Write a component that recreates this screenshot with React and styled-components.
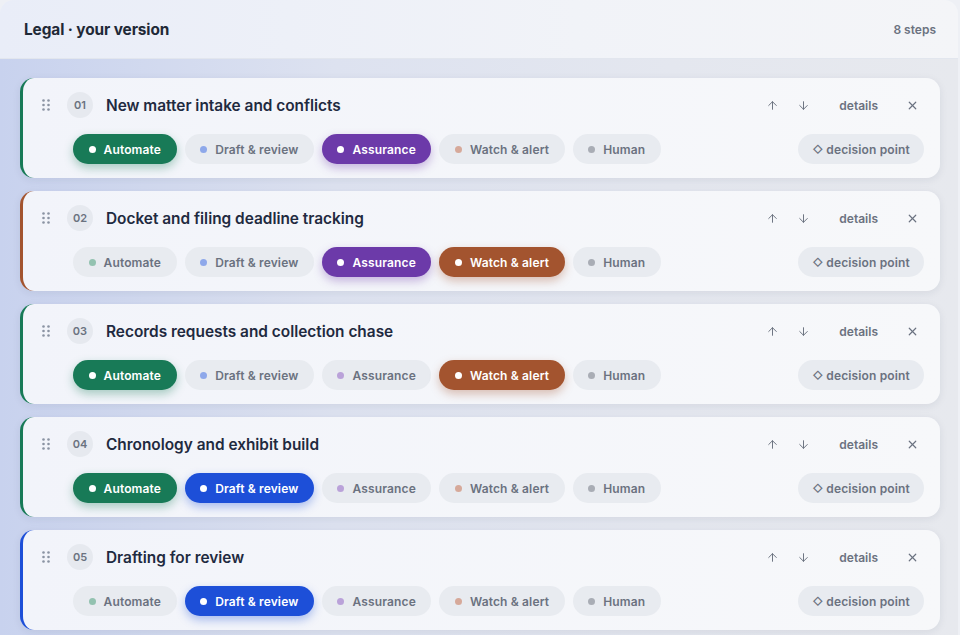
import React from 'react';
import styled, { createGlobalStyle } from 'styled-components';
import { ArrowUp, ArrowDown, X } from 'lucide-react';

const Global = createGlobalStyle`
	body {
		margin: 0;
		background: #eef0f5;
		font-family: Inter, 'Noto Sans', sans-serif;
	}
`;

const colors = {
	auto: { on: '#187a57', dot: '#93c2b0', glow: 'rgba(24,122,87,0.35)' },
	draft: { on: '#1d4fd8', dot: '#8ea8ea', glow: 'rgba(29,79,216,0.35)' },
	assure: { on: '#6c3aa9', dot: '#baa2d9', glow: 'rgba(108,58,169,0.35)' },
	watch: { on: '#a3542f', dot: '#d6a99a', glow: 'rgba(163,84,47,0.35)' },
	human: { on: '#4b5563', dot: '#a9adb5', glow: 'rgba(75,85,99,0.3)' },
};

const modes = [
	{ key: 'auto', label: 'Automate' },
	{ key: 'draft', label: 'Draft & review' },
	{ key: 'assure', label: 'Assurance' },
	{ key: 'watch', label: 'Watch & alert' },
	{ key: 'human', label: 'Human' },
];

const steps = [
	{ n: '01', title: 'New matter intake and conflicts', edge: '#187a57', active: ['auto', 'assure'] },
	{ n: '02', title: 'Docket and filing deadline tracking', edge: '#a3542f', active: ['assure', 'watch'] },
	{ n: '03', title: 'Records requests and collection chase', edge: '#187a57', active: ['auto', 'watch'] },
	{ n: '04', title: 'Chronology and exhibit build', edge: '#187a57', active: ['auto', 'draft'] },
	{ n: '05', title: 'Drafting for review', edge: '#1d4fd8', active: ['draft'] },
];

const Handle = () => (
	<svg width="8" height="12" viewBox="0 0 8 12" fill="#8a93a3">
		<circle cx="1.5" cy="1.5" r="1.3" />
		<circle cx="6.5" cy="1.5" r="1.3" />
		<circle cx="1.5" cy="6" r="1.3" />
		<circle cx="6.5" cy="6" r="1.3" />
		<circle cx="1.5" cy="10.5" r="1.3" />
		<circle cx="6.5" cy="10.5" r="1.3" />
	</svg>
);

export default function App() {
	return (
		<>
			<Global />
			<Panel>
				<Header>
					<h2>Legal · your version</h2>
					<span>8 steps</span>
				</Header>
				<List>
					{steps.map((s) => (
						<Card key={s.n} $edge={s.edge}>
							<TopRow>
								<Grip>
									<Handle />
								</Grip>
								<Num>{s.n}</Num>
								<Title>{s.title}</Title>
								<Actions>
									<IconBtn>
										<ArrowUp size={13} strokeWidth={1.8} />
									</IconBtn>
									<IconBtn>
										<ArrowDown size={13} strokeWidth={1.8} />
									</IconBtn>
									<TextBtn>details</TextBtn>
									<IconBtn>
										<X size={13} strokeWidth={2.2} />
									</IconBtn>
								</Actions>
							</TopRow>
							<PillRow>
								{modes.map((m) => {
									const on = s.active.includes(m.key);
									const c = colors[m.key];
									return (
										<Pill key={m.key} $on={on} $c={c}>
											<Dot $on={on} $c={c} />
											{m.label}
										</Pill>
									);
								})}
								<Decision>
									<i>◇</i>decision point
								</Decision>
							</PillRow>
						</Card>
					))}
				</List>
			</Panel>
		</>
	);
}

const Panel = styled.div`
	width: 958px;
	height: 635px;
	overflow: hidden;
	border-radius: 14px 14px 0 0;
	background: #eef1f8;
`;

const Header = styled.div`
	height: 58px;
	display: flex;
	align-items: center;
	justify-content: space-between;
	padding: 0 22px 0 24px;
	background: linear-gradient(90deg, #e9edf8 0%, #f1f3f8 60%, #f4f5f8 100%);
	border-bottom: 1px solid #e2e6ee;
	h2 {
		margin: 0;
		font-size: 15.4px;
		font-weight: 700;
		color: #1f2937;
		letter-spacing: -0.1px;
	}
	span {
		font-size: 12px;
		font-weight: 600;
		color: #6b7280;
	}
`;

const List = styled.div`
	display: flex;
	flex-direction: column;
	gap: 13px;
	padding: 19px 18px 0 20px;
	height: 100%;
	background: linear-gradient(90deg, #c8d2ee 0%, #dde2f0 35%, #e4e7ef 70%, #e7e9ee 100%);
`;

const Card = styled.div`
	height: 100px;
	box-sizing: border-box;
	flex-shrink: 0;
	display: flex;
	flex-direction: column;
	padding: 14px 16px 14px 17px;
	gap: 16px;
	background: linear-gradient(90deg, #f2f4fa 0%, #f7f8fa 100%);
	border-left: 3px solid ${(p) => p.$edge};
	border-radius: 14px;
	box-shadow: 0 2px 8px rgba(30, 40, 70, 0.08);
`;

const TopRow = styled.div`
	height: 26px;
	display: flex;
	align-items: center;
`;

const Grip = styled.div`
	width: 12px;
	display: flex;
	justify-content: center;
	margin-left: 0;
	margin-right: 15px;
`;

const Num = styled.div`
	width: 26px;
	height: 26px;
	border-radius: 50%;
	background: #e6e9ef;
	color: #6b7280;
	font-size: 11px;
	font-weight: 600;
	display: flex;
	align-items: center;
	justify-content: center;
	margin-right: 13px;
`;

const Title = styled.div`
	font-size: 15.4px;
	font-weight: 600;
	color: #1f2a40;
`;

const Actions = styled.div`
	margin-left: auto;
	display: flex;
	align-items: center;
	color: #6b7280;
`;

const IconBtn = styled.button`
	width: 24px;
	height: 24px;
	border: none;
	background: none;
	padding: 0;
	display: flex;
	align-items: center;
	justify-content: center;
	color: #6b7280;
	& + & {
		margin-left: 7px;
	}
`;

const TextBtn = styled.button`
	border: none;
	background: none;
	font-family: inherit;
	font-size: 12px;
	font-weight: 600;
	color: #6b7280;
	padding: 0 10px;
	margin: 0 12px 0 14px;
`;

const PillRow = styled.div`
	display: flex;
	align-items: center;
	gap: 8px;
	padding-left: 33px;
`;

const Pill = styled.div`
	height: 30px;
	box-sizing: border-box;
	display: flex;
	align-items: center;
	gap: 8px;
	padding: 0 15.5px;
	border-radius: 15px;
	font-size: 12px;
	font-weight: 600;
	letter-spacing: 0.15px;
	background: ${(p) => (p.$on ? p.$c.on : '#e8ebf0')};
	color: ${(p) => (p.$on ? '#ffffff' : '#6b7280')};
	box-shadow: ${(p) => (p.$on ? `0 4px 10px ${p.$c.glow}` : 'none')};
`;

const Dot = styled.span`
	width: 7px;
	height: 7px;
	border-radius: 50%;
	background: ${(p) => (p.$on ? '#ffffff' : p.$c.dot)};
`;

const Decision = styled.div`
	margin-left: auto;
	height: 30px;
	box-sizing: border-box;
	display: flex;
	align-items: center;
	gap: 3px;
	padding: 0 14px 0 15px;
	border-radius: 15px;
	background: #e8ebf0;
	color: #6b7280;
	font-size: 12px;
	font-weight: 600;
	letter-spacing: 0.15px;
	i {
		font-style: normal;
		font-size: 10px;
		font-weight: 700;
	}
`;
